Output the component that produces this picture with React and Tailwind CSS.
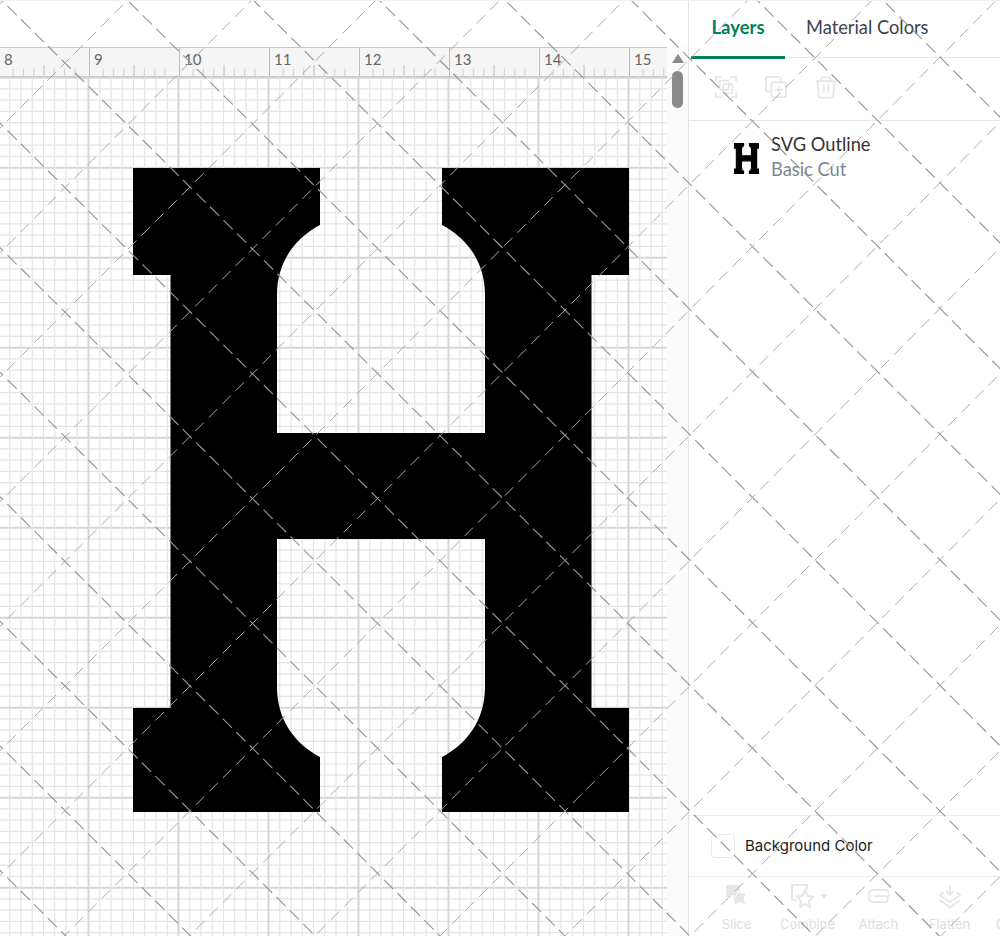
import React from "react";

const H_PATH =
  "M133 168H320V225C295 238 277 262 277 295V433H485V295C485 262 467 238 442 225V168H629V275H591.5V708H629V812H442V757C467 744 485 720 485 687V539H277V687C277 720 295 744 320 757V812H133V708H170.5V275H133Z";

const range = (a, b) => Array.from({ length: b - a + 1 }, (_, i) => a + i);

function Grid() {
  const ys = range(0, 76).map((k) => 77.7 + 11.25 * k);
  const isMajor = (k) => k % 8 === 0;
  return (
    <svg className="block w-[667px] h-[859px]" viewBox="0 77 667 859">
      {ys.map((y, k) => (
        <line key={k} x1="0" x2="667" y1={y} y2={y} stroke={isMajor(k) ? "#d6d6d6" : "#e4e4e4"} strokeWidth={isMajor(k) ? 2 : 1.2} />
      ))}
      {range(-8, 52).map((k) => {
        const x = 88.5 + 11.25 * k;
        if (x < 0 || x > 667) return null;
        return <line key={k} y1="77" y2="936" x1={x} x2={x} stroke={isMajor(k + 8) ? "#d6d6d6" : "#e4e4e4"} strokeWidth={isMajor(k + 8) ? 2 : 1.2} />;
      })}
      <path d={H_PATH} fill="#000" />
    </svg>
  );
}

function RulerCell({ n }) {
  const ticks = [
    [11.25, 8, "#d4d4d4"],
    [22.5, 8, "#d4d4d4"],
    [33.75, 8, "#d4d4d4"],
    [45, 12, "#c4c4c4"],
    [56.25, 8, "#d4d4d4"],
    [67.5, 8, "#d4d4d4"],
    [78.75, 8, "#d4d4d4"],
  ];
  return (
    <div className="w-[90px] shrink-0 border-l border-[#bdbdbd] flex flex-col">
      <div className="h-[17px] pl-[4.5px] pt-[3px] text-[15px] leading-[17px] text-[#666] font-['Lato',sans-serif]">{n}</div>
      <svg className="block mt-auto w-[89px] h-[12px]" viewBox="0 0 89 12">
        {ticks.map(([x, h, c]) => (
          <line key={x} x1={x - 1} x2={x - 1} y1={12 - h} y2="12" stroke={c} strokeWidth="1.3" />
        ))}
      </svg>
    </div>
  );
}

function Watermark() {
  const point = (i, j) => {
    const x = 2.5 + 62.5 * i;
    const t = (x - 65) / 750;
    const yL = -0.3 + 62.3 * j;
    const yR = -5.75 + 62.75 * j;
    return [x, yL + (yR - yL) * t];
  };
  const lines = [];
  for (let c = -16; c <= 16; c += 2) {
    const pts = [];
    for (let i = -1; i <= 17; i++) pts.push(point(i, i - c));
    lines.push(<polyline key={"a" + c} points={pts.map((p) => p.join(",")).join(" ")} fill="none" stroke="#969696" strokeWidth="1.15" strokeDasharray="13 6" />);
  }
  for (let c = 0; c <= 34; c += 2) {
    const pts = [];
    for (let i = -1; i <= 17; i++) pts.push(point(i, c - i));
    lines.push(<polyline key={"b" + c} points={pts.map((p) => p.join(",")).join(" ")} fill="none" stroke="#aaaaaa" strokeWidth="1" strokeDasharray="12 7" />);
  }
  return (
    <svg className="absolute inset-0 w-[1000px] h-[936px] pointer-events-none" viewBox="0 0 1000 936">
      {lines}
    </svg>
  );
}

const iconStroke = { fill: "none", stroke: "#e6e6e6", strokeWidth: 2 };

function SelectIcon() {
  return (
    <svg className="w-[22px] h-[22px]" viewBox="0 0 24 24" {...iconStroke}>
      <path d="M1 6V1H7M17 1H23V6M23 18V23H17M7 23H1V18" />
      <rect x="5" y="5" width="10" height="10" rx="1.5" />
      <rect x="9" y="9" width="10" height="10" rx="1.5" />
    </svg>
  );
}
function DuplicateIcon() {
  return (
    <svg className="w-[22px] h-[22px]" viewBox="0 0 24 24" {...iconStroke}>
      <path d="M7 17H3Q1 17 1 15V3Q1 1 3 1H15Q17 1 17 3V7" />
      <rect x="7" y="7" width="16" height="16" rx="2" />
      <path d="M15 11V19M11 15H19" />
    </svg>
  );
}
function TrashIcon() {
  return (
    <svg className="w-[22px] h-[23px]" viewBox="0 0 24 24" {...iconStroke}>
      <path d="M1 5H23M7 5V2Q7 1 8 1H16Q17 1 17 2V5M3 5L4 21Q4 23 6 23H18Q20 23 20 21L21 5M9.5 9V18M14.5 9V18" />
    </svg>
  );
}

function ToolItem({ label, children }) {
  return (
    <div className="w-[71px] shrink-0 flex flex-col items-center">
      <div className="h-[34px] flex items-center justify-center">{children}</div>
      <div className="text-[13px] leading-[16px] text-[#dedede] font-['Inter',sans-serif] whitespace-nowrap mt-[3px]">{label}</div>
    </div>
  );
}

export default function App() {
  return (
    <div className="relative w-[1000px] h-[936px] overflow-hidden bg-white flex border-t border-[#f0f0f0]">
      <div className="w-[689px] shrink-0 border-r border-[#e3e3e3] flex flex-col">
        <div className="h-[46px] shrink-0" />
        <div className="flex flex-1 min-h-0">
          <div className="w-[667px] shrink-0 flex flex-col overflow-hidden">
            <div className="h-[30px] shrink-0 bg-[#f5f5f5] border-t border-b border-[#c8c8c8] flex ml-[-1.5px] w-[668.5px] overflow-hidden">
              {[8, 9, 10, 11, 12, 13, 14, 15].map((n) => (
                <RulerCell key={n} n={n} />
              ))}
            </div>
            <Grid />
          </div>
          <div className="flex-1 bg-[#fbfbfb] flex flex-col items-center pt-[7px]">
            <div className="w-0 h-0 border-l-[6.5px] border-r-[6.5px] border-b-[9px] border-l-transparent border-r-transparent border-b-[#8a8a8a]" />
            <div className="w-[11px] h-[37px] mt-[8px] rounded-full bg-[#8a8a8a]" />
          </div>
        </div>
      </div>

      <div className="flex-1 min-w-0 flex flex-col">
        <div className="h-[57px] shrink-0 border-b border-[#e6e6e6] flex items-stretch pl-[2px]">
          <div className="w-[94px] h-[58px] border-b-[3px] border-[#00805d] flex items-center justify-center pb-[1px] text-[18.5px] font-bold text-[#00805d] font-['Lato',sans-serif]">
            Layers
          </div>
          <div className="pl-[21px] pb-[2px] flex items-center text-[18.3px] text-[#3a4250] font-['Lato',sans-serif] whitespace-nowrap">
            Material Colors
          </div>
        </div>
        <div className="h-[63px] shrink-0 border-b border-[#e6e6e6] flex items-center gap-[28px] pl-[26px] pb-[4px]">
          <SelectIcon />
          <DuplicateIcon />
          <TrashIcon />
        </div>
        <div className="flex items-start pl-[45px] pt-[21px] gap-[12px] flex-1">
          <svg className="w-[25px] h-[31px] mt-[1px]" viewBox="133 168 496 644">
            <path d={H_PATH} fill="#000" stroke="#000" strokeWidth="24" />
          </svg>
          <div className="font-['Lato',sans-serif] -mt-[10px]">
            <div className="text-[18.3px] leading-[25px] text-[#333]">SVG Outline</div>
            <div className="text-[18.3px] leading-[25px] text-[#7d8590]">Basic Cut</div>
          </div>
        </div>
        <div className="h-[62px] shrink-0 border-t border-b border-[#ececec] flex items-center pl-[22px] gap-[10px]">
          <div className="w-[24px] h-[24px] rounded-[4px] border border-[#e8e8e8]" />
          <div className="text-[15px] text-[#222] font-['Inter',sans-serif] pt-[1px]">Background Color</div>
        </div>
        <div className="h-[59px] shrink-0 flex pl-[12px] pt-[2px] overflow-hidden">
          <ToolItem label="Slice">
            <svg className="w-[24px] h-[24px]" viewBox="0 0 24 24" fill="#e6e6e6">
              <path d="M1 1H15V8L11 13H1Z" />
              <path d="M13 7L16 9L22 9L19 14L21 21L15 18L9 21L9 15L6 12L11 12Z" stroke="#fff" strokeWidth="1" strokeLinejoin="round" />
            </svg>
          </ToolItem>
          <ToolItem label="Combine">
            <div className="flex items-center gap-[6px] ml-[3px]">
              <svg className="w-[23px] h-[24px]" viewBox="0 0 23 24" {...iconStroke}>
                <path d="M6 16H1V1H16V6" />
                <path d="M14 6L16.8 12L22 12.8L18 17L19 23L14 20L9 23L10 17L6 12.8L11.2 12Z" />
              </svg>
              <div className="w-0 h-0 border-l-[4.5px] border-r-[4.5px] border-t-[5px] border-l-transparent border-r-transparent border-t-[#e6e6e6]" />
            </div>
          </ToolItem>
          <ToolItem label="Attach">
            <svg className="w-[26px] h-[14px]" viewBox="0 0 26 16" {...iconStroke}>
              <path d="M24 8.5V5Q24 1 20 1H6Q1 1 1 8T6 15H20Q23 15 23 11.5T20 8H7" />
            </svg>
          </ToolItem>
          <ToolItem label="Flatten">
            <svg className="w-[22px] h-[25px]" viewBox="0 0 24 26" {...iconStroke}>
              <path d="M12 1V11M8 7L12 11L16 7M5 8L1 12L12 19L23 12L19 8M1 17L12 25L23 17" />
            </svg>
          </ToolItem>
          <ToolItem label="Contour">
            <div className="w-[24px] h-[24px]" />
          </ToolItem>
        </div>
      </div>
      <Watermark />
    </div>
  );
}
